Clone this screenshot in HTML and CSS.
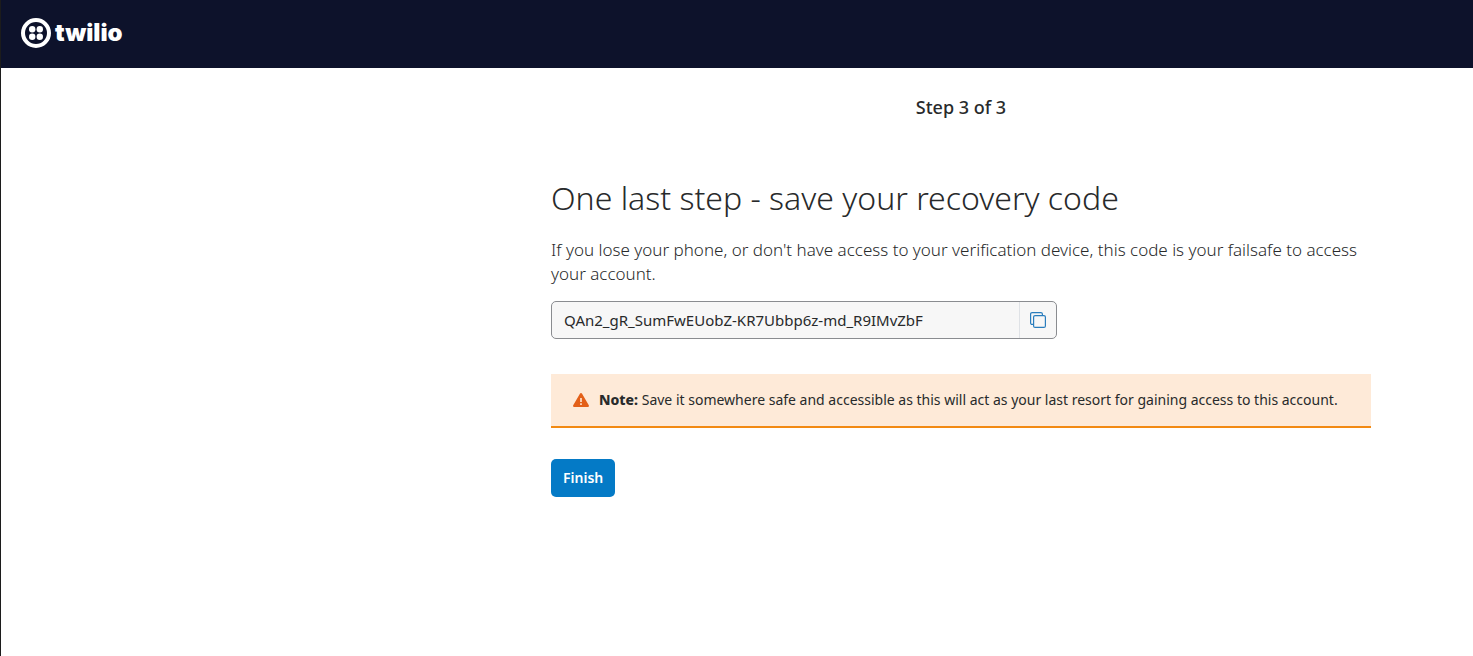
FILE: index.html
```html
<!DOCTYPE html>
<html lang="en">
<head>
<meta charset="utf-8">
<meta name="viewport" content="width=device-width, initial-scale=1">
<title>Save your recovery code</title>
<link rel="stylesheet" href="styles.css">
</head>
<body>
<header class="topbar">
  <a class="brand" href="#">
    <svg class="brand-mark" viewBox="0 0 30 30" aria-hidden="true">
      <circle cx="15" cy="15" r="13" fill="none" stroke="#fff" stroke-width="4"/>
      <g fill="#fff"><circle cx="11.2" cy="11.2" r="3.2"/><circle cx="18.8" cy="11.2" r="3.2"/><circle cx="11.2" cy="18.8" r="3.2"/><circle cx="18.8" cy="18.8" r="3.2"/></g>
    </svg>
    <span class="brand-name">twilio</span>
  </a>
</header>
<div class="layout">
  <main class="content">
    <p class="progress">Step 3 of 3</p>
    <h1 class="title">One last step - save your recovery code</h1>
    <p class="intro">If you lose your phone, or don't have access to your verification device, this code is your failsafe to access your account.</p>
    <div class="code-field">
      <input class="code-input" type="text" readonly aria-label="Recovery code" value="QAn2_gR_SumFwEUobZ-KR7Ubbp6z-md_R9IMvZbF">
      <button class="copy-button" type="button" aria-label="Copy recovery code">
        <svg class="copy-icon" viewBox="0 0 16 16" fill="none" stroke="#2a7dbd" stroke-width="1.2" aria-hidden="true">
          <rect x="3.6" y="3.6" width="11.8" height="11.8" rx="1.5"/>
          <path d="M3.6 12.4H2.1A1.5 1.5 0 0 1 .6 10.9V2.1A1.5 1.5 0 0 1 2.1.6H10.9A1.5 1.5 0 0 1 12.4 2.1V3.6"/>
        </svg>
      </button>
    </div>
    <div class="note" role="note">
      <svg class="note-icon" viewBox="0 0 16 14" aria-hidden="true">
        <path d="M8 0Q8.7 0 9.1.7L15.8 12.3Q16.4 14 14.8 14H1.2Q-.4 14 .2 12.3L6.9.7Q7.3 0 8 0Z" fill="#e36019"/>
        <path d="M8 5V8.9M8 10.3V12" stroke="#feead8" stroke-width="1.6"/>
      </svg>
      <p class="note-text"><strong>Note:</strong> Save it somewhere safe and accessible as this will act as your last resort for gaining access to this account.</p>
    </div>
    <button class="finish" type="button">Finish</button>
  </main>
</div>
</body>
</html>
```
FILE: styles.css
```css
* { box-sizing: border-box; }
body {
  margin: 0;
  min-height: 100vh;
  border-left: 1px solid #1c1c1c;
  background: #fff;
  color: #282a2b;
  font-family: "Noto Sans", "Open Sans", sans-serif;
}
p, h1 { margin: 0; }
.topbar {
  display: flex;
  align-items: center;
  height: 68px;
  padding: 0 20px 2px;
  background: #0d122b;
}
.brand {
  display: flex;
  align-items: center;
  gap: 4px;
  color: #fff;
  text-decoration: none;
}
.brand-mark { width: 30px; height: 30px; }
.brand-name {
  font: 900 24px/30px Inter, sans-serif;
}
.layout {
  padding: 24px 24px 48px 472px;
}
.content {
  max-width: 820px;
  margin: 0 auto;
}
.progress {
  font-size: 18px;
  font-weight: 500;
  line-height: 30px;
  text-align: center;
}
.title {
  margin-top: 56px;
  font-size: 32px;
  font-weight: 300;
  line-height: 40px;
}
.intro {
  margin-top: 20px;
  font-size: 17px;
  font-weight: 350;
  line-height: 24px;
}
.code-field {
  display: flex;
  max-width: 506px;
  height: 38px;
  margin-top: 15px;
  border: 1px solid #8a8c90;
  border-radius: 5px;
  background: #f7f7f7;
  overflow: hidden;
}
.code-input {
  flex: 1;
  min-width: 0;
  padding: 0 12px;
  border: 0;
  background: transparent;
  color: #282a2b;
  font: 400 15px/20px "Noto Sans", sans-serif;
}
.copy-button {
  display: flex;
  align-items: center;
  justify-content: center;
  width: 37px;
  padding: 0;
  border: 0;
  border-left: 1px solid #dfe2e6;
  background: transparent;
}
.copy-icon { width: 16px; height: 16px; }
.note {
  display: flex;
  align-items: center;
  gap: 10px;
  margin-top: 35px;
  padding: 14px 20px 14px 22px;
  border-bottom: 2px solid #f28a13;
  background: #feead8;
}
.note-icon { flex: none; width: 16px; height: 14px; }
.note-text { font-size: 14px; line-height: 24px; }
.note-text strong { font-weight: 800; }
.finish {
  height: 38px;
  margin-top: 31px;
  padding: 0 12px;
  border: 0;
  border-radius: 5px;
  background: #047ac6;
  color: #fff;
  font: 600 14px/20px "Noto Sans", sans-serif;
}
```
